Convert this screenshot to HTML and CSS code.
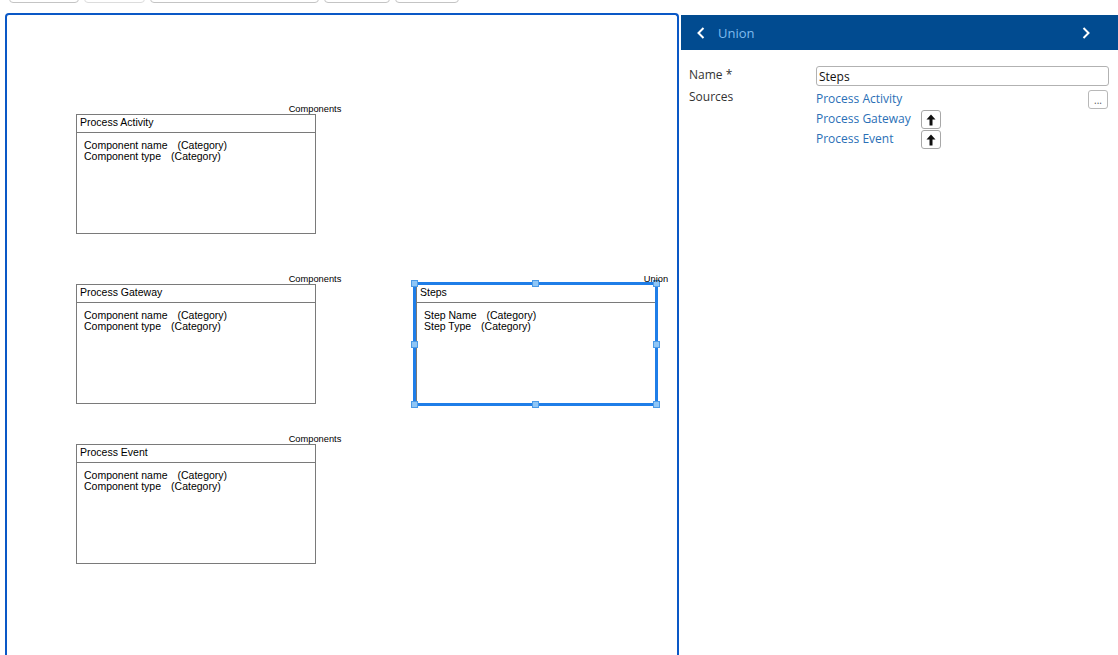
FILE: index.html
```html
<!DOCTYPE html>
<html>
<head>
<meta charset="utf-8">
<title>Union</title>
<link rel="stylesheet" href="styles.css">
</head>
<body>
<div class="toolbar">
  <div class="tb-btn w1"></div>
  <div class="tb-btn w2 light"></div>
  <div class="tb-btn w3"></div>
  <div class="tb-btn w4"></div>
  <div class="tb-btn w5"></div>
</div>
<div class="main">
  <div class="canvas">
    <div class="node n1">
      <div class="node-label">Components</div>
      <div class="node-title">Process Activity</div>
      <div class="node-body">
        <div class="attr"><span>Component name</span><span class="cat">(Category)</span></div>
        <div class="attr"><span>Component type</span><span class="cat">(Category)</span></div>
      </div>
    </div>
    <div class="node n2">
      <div class="node-label">Components</div>
      <div class="node-title">Process Gateway</div>
      <div class="node-body">
        <div class="attr"><span>Component name</span><span class="cat">(Category)</span></div>
        <div class="attr"><span>Component type</span><span class="cat">(Category)</span></div>
      </div>
    </div>
    <div class="node n3">
      <div class="node-label">Components</div>
      <div class="node-title">Process Event</div>
      <div class="node-body">
        <div class="attr"><span>Component name</span><span class="cat">(Category)</span></div>
        <div class="attr"><span>Component type</span><span class="cat">(Category)</span></div>
      </div>
    </div>
    <div class="node n4">
      <div class="node-title">Steps</div>
      <div class="node-body">
        <div class="attr"><span>Step Name</span><span class="cat">(Category)</span></div>
        <div class="attr"><span>Step Type</span><span class="cat">(Category)</span></div>
      </div>
      <div class="selection">
        <span class="handle h-tl"></span>
        <span class="handle h-tc"></span>
        <span class="handle h-tr"></span>
        <span class="handle h-ml"></span>
        <span class="handle h-mr"></span>
        <span class="handle h-bl"></span>
        <span class="handle h-bc"></span>
        <span class="handle h-br"></span>
      </div>
      <div class="node-label">Union</div>
    </div>
  </div>
  <div class="panel">
    <div class="panel-header">
      <svg class="chev" width="8" height="12" viewBox="0 0 8 12"><polyline points="6.5,1 1.5,6 6.5,11" fill="none" stroke="#fff" stroke-width="2"/></svg>
      <span class="panel-title">Union</span>
      <svg class="chev chev-right" width="8" height="12" viewBox="0 0 8 12"><polyline points="1.5,1 6.5,6 1.5,11" fill="none" stroke="#fff" stroke-width="2"/></svg>
    </div>
    <div class="form">
      <div class="label">Name *</div>
      <div class="input">Steps</div>
      <div class="label label-sources">Sources</div>
      <div class="sources">
        <div class="src-row">
          <a class="src-link">Process Activity</a>
          <div class="small-btn dots">...</div>
        </div>
        <div class="src-row">
          <a class="src-link">Process Gateway</a>
          <div class="small-btn up"><svg width="10" height="12" viewBox="0 0 10 12"><path d="M5 0.5 L9.5 5.5 H6.5 V11.5 H3.5 V5.5 H0.5 Z" fill="#111"/></svg></div>
        </div>
        <div class="src-row">
          <a class="src-link">Process Event</a>
          <div class="small-btn up"><svg width="10" height="12" viewBox="0 0 10 12"><path d="M5 0.5 L9.5 5.5 H6.5 V11.5 H3.5 V5.5 H0.5 Z" fill="#111"/></svg></div>
        </div>
      </div>
    </div>
  </div>
</div>
</body>
</html>
```

FILE: styles.css
```css
html, body {
  margin: 0;
  height: 100%;
  overflow: hidden;
  background: #fff;
  font-family: "Open Sans", "Liberation Sans", sans-serif;
}

.toolbar {
  display: flex;
  gap: 5px;
  padding-left: 9px;
  height: 3px;
  align-items: flex-end;
  overflow: hidden;
}

.tb-btn {
  flex: none;
  height: 26px;
  box-sizing: border-box;
  border: 1px solid #c4c4c4;
  border-radius: 4px;
  background: #fff;
}
.tb-btn.light { border-color: #dcdcdc; }
.w1 { width: 70px; }
.w2 { width: 61px; }
.w3 { width: 169px; }
.w4 { width: 66px; }
.w5 { width: 64px; }

.main {
  display: flex;
  align-items: flex-start;
}

.canvas {
  position: relative;
  flex: none;
  margin-left: 5px;
  margin-top: 10px;
  width: 674px;
  height: 660px;
  box-sizing: border-box;
  border: 2px solid #0a58c6;
  border-bottom: none;
  border-radius: 4px 4px 0 0;
  font-family: "Liberation Sans", Arial, sans-serif;
  color: #000;
}

.node {
  position: absolute;
  width: 240px;
  height: 120px;
  box-sizing: border-box;
  border: 1px solid #7a7a7a;
  background: #fff;
}
.n1 { left: 69px; top: 99px; }
.n2 { left: 69px; top: 269px; }
.n3 { left: 69px; top: 429px; }
.n4 { left: 409px; top: 269px; width: 240px; }

.node-label {
  position: absolute;
  left: 100%;
  top: -6px;
  transform: translate(-50%, -50%);
  font-size: 9.3px;
  line-height: 10px;
  white-space: nowrap;
}
.n4 .node-label { left: calc(100% + 1px); top: -6px; }

.node-title {
  height: 17px;
  line-height: 15px;
  border-bottom: 1px solid #7a7a7a;
  padding-left: 3px;
  font-size: 10.5px;
}

.node-body {
  padding: 7px 7px;
  font-size: 10.5px;
  line-height: 11px;
}
.attr { white-space: nowrap; }
.cat { margin-left: 10px; }

.selection {
  position: absolute;
  top: -3px;
  left: -4px;
  right: -3px;
  bottom: -3px;
  border: 3px solid #1f7ee8;
  pointer-events: none;
}

.handle {
  position: absolute;
  width: 7px;
  height: 7px;
  box-sizing: border-box;
  background: #8fc6f6;
  border: 1px solid #4d9be6;
}
.h-tl { left: -5px; top: -5px; }
.h-tc { left: calc(50% - 3.5px); top: -5px; }
.h-tr { left: calc(100% - 2px); top: -5px; }
.h-ml { left: -5px; top: calc(50% - 3.5px); }
.h-mr { left: calc(100% - 2px); top: calc(50% - 3.5px); }
.h-bl { left: -5px; top: calc(100% - 2px); }
.h-bc { left: calc(50% - 3.5px); top: calc(100% - 2px); }
.h-br { left: calc(100% - 2px); top: calc(100% - 2px); }

.panel {
  flex: 1;
  margin-left: 2px;
  margin-top: 12px;
  font-size: 12px;
  color: #333;
}

.panel-header {
  display: flex;
  align-items: center;
  height: 35px;
  background: #014b90;
  padding: 0 28px 0 16px;
}
.chev { flex: none; display: block; }
.panel-title {
  margin-left: 13px;
  font-size: 13px;
  color: #7fbcee;
}
.chev-right { margin-left: auto; }

.form {
  display: grid;
  grid-template-columns: 127px 1fr;
  row-gap: 3px;
  padding: 16px 9px 0 8px;
}

.label {
  line-height: 18px;
  color: #333;
}
.label-sources { margin-top: -1px; }

.input {
  height: 20px;
  box-sizing: border-box;
  border: 1px solid #b2b2b2;
  border-radius: 3px;
  padding: 0 2px;
  line-height: 20px;
  color: #111;
}

.sources {
  display: flex;
  flex-direction: column;
}
.src-row {
  display: flex;
  align-items: center;
  height: 20px;
}
.src-link {
  width: 105px;
  color: #2a6fb6;
  white-space: nowrap;
  line-height: 20px;
}

.small-btn {
  flex: none;
  width: 20px;
  height: 19px;
  box-sizing: border-box;
  border: 1px solid #a8a8a8;
  border-radius: 3px;
  background: #fff;
  display: flex;
  align-items: center;
  justify-content: center;
}
.up { margin-top: 1px; }
.dots {
  margin-left: auto;
  margin-right: 1px;
  border-color: #b8b8b8;
  font-size: 10px;
  line-height: 10px;
  color: #555;
  align-items: flex-end;
  padding-bottom: 3px;
}
```
